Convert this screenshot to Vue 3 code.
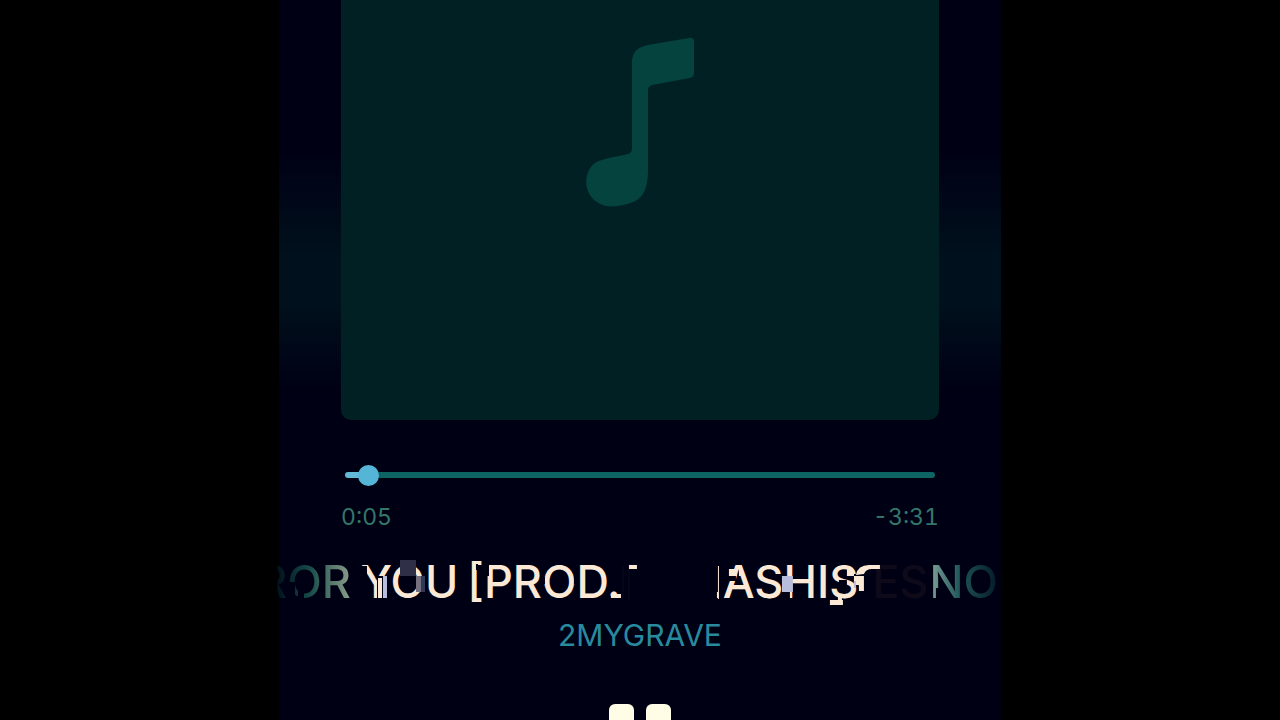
<script setup>
import { ref } from 'vue'

const duration = 216
const elapsed = ref(5)
const fmt = (s) => `${Math.floor(s / 60)}:${String(s % 60).padStart(2, '0')}`
</script>

<template>
  <div class="screen">
    <main class="player">
      <div class="artwork">
        <svg class="note" viewBox="0 0 110 172" aria-hidden="true">
          <path d="M47 25C47 15 53 10 63 8L104 1Q109 0 109 5V36Q109 40 105 41L67 48Q63 49 63 54V133C63 155 56 164 42 167C31 170 20 171 12 165C-2 156-2 135 10 126C18 121 32 120 43 117Q47 116 47 111Z" />
        </svg>
      </div>

      <section class="progress">
        <input id="seek" v-model.number="elapsed" class="seek" type="range" min="0" :max="duration" aria-label="Seek" :style="{ '--fill': (elapsed / duration) * 100 + '%' }" />
        <div class="times">
          <span>{{ fmt(elapsed) }}</span>
          <span>-{{ fmt(duration - elapsed) }}</span>
        </div>
      </section>

      <h1 class="title">
        <span class="lead">ROR</span>
        <span class="you">YOU</span>
        <span class="prod">[PROD.</span>
        <span class="hash">ASHIS</span>
        <span class="es">ES</span>
        <span class="no">NO</span>
        <svg class="glitch" viewBox="0 -2 722 56" preserveAspectRatio="none" aria-hidden="true">
          <g fill="#000014">
            <path d="M10 26H16V46H10ZM19 22H25V46H19ZM83 10H88V21H83ZM84 30H88V42H84ZM98 20H105V42H98ZM103 36H110V46H103ZM197 8H199V14H197ZM204 6H210V20H204ZM261 21H266V28H261ZM281 21H284V27H281ZM295 21H299V28H295ZM450 20H457V25H450ZM504 36H511V46H504ZM560 24H568V34H560ZM657 32H664V46H657Z" />
          </g>
          <g fill="#fbe9d6">
            <path d="M99 22H103V42H99ZM350 9H358V13H350ZM332 38H342V42H332ZM439 10H440V43H439ZM438 36H440V42H438ZM450 13H458V20H450ZM460 11H462V20H460ZM551 44H564V49H551ZM559 41H563V45H559ZM568 14H575V20H568ZM575 20H585V35H580V29H575ZM577 19Q579 9 590 9H601V13H593Q587 13 585 18Z" />
          </g>
          <path fill="#302f48" d="M121 4H137V20H121Z" />
          <path fill="#756f80" d="M137 20H142V36H137Z" />
          <path fill="#303857" d="M142 20H146V36H142Z" />
          <path fill="#b9bddc" d="M104 20H108V42H104ZM503 20H514V36H503ZM575 25H577V32H575Z" />
          <path stroke="#0b0b20" d="M344 10V42M350 13V44" />
        </svg>
      </h1>
      <p class="artist">2MYGRAVE</p>

      <button class="pause" type="button" aria-label="Pause"><i></i><i></i></button>
    </main>
  </div>
</template>

<style>
body {
  background: #000;
}
</style>

<style scoped>
.screen {
  height: 100vh;
  overflow: hidden;
  background: #000;
  font-family: Inter, "Liberation Sans", sans-serif;
}

.player {
  box-sizing: border-box;
  display: flex;
  flex-direction: column;
  width: 56.4%;
  min-height: 100%;
  margin: 0 auto;
  padding: 0 62px;
  background: linear-gradient(#000014 150px, #00111d 260px, #00111d 300px, #000014 390px);
}

.artwork {
  display: grid;
  place-items: center;
  aspect-ratio: 1;
  margin-top: -178px;
  border-radius: 10px;
  background: #002024;
}

.note {
  width: 110px;
  height: 172px;
  margin-top: 4px;
  fill: #05433e;
}

.progress {
  margin-top: 44px;
}

.seek {
  display: block;
  appearance: none;
  width: calc(100% - 8px);
  height: 22px;
  margin: 0 4px;
  background: none;
  cursor: pointer;
}

.seek::-webkit-slider-runnable-track {
  height: 6px;
  border-radius: 3px;
  background: linear-gradient(to right, #63b9d5 var(--fill), #0e6462 var(--fill));
}

.seek::-webkit-slider-thumb {
  appearance: none;
  width: 21px;
  height: 21px;
  margin-top: -7px;
  border-radius: 50%;
  background: #55b5d6;
}

.times {
  display: flex;
  justify-content: space-between;
  margin-top: 16px;
  color: #347769;
  font-size: 23px;
  line-height: 30px;
  font-variant-numeric: tabular-nums;
}

.title {
  position: relative;
  display: flex;
  margin: 22px -62px 0;
  color: #fbe9d6;
  font-size: 45px;
  font-weight: 500;
  line-height: 56px;
  white-space: nowrap;
}

.lead {
  margin-left: -21px;
  color: transparent;
  background: linear-gradient(to right, #0000 20%, #03141f 22%, #164a48 55%, #8c9e8b);
  background-clip: text;
}

.you {
  margin-left: 10px;
}

.prod {
  margin-left: 9px;
}

.hash {
  margin-left: 102px;
}

.es {
  margin-left: 14px;
  color: #0e0a1a;
}

.no {
  margin-left: 1px;
  color: transparent;
  background: linear-gradient(to right, #83a59a, #1f5558 45%, #041b27);
  background-clip: text;
}

.glitch {
  position: absolute;
  inset: 0;
  width: 100%;
  height: 100%;
}

.artist {
  margin: 7px 0 0;
  color: #298a9e;
  font-size: 30px;
  line-height: 36px;
  text-align: center;
}

.pause {
  display: flex;
  align-self: center;
  gap: 12px;
  margin-top: 51px;
  padding: 0;
  border: 0;
  background: none;
  cursor: pointer;
}

.pause i {
  width: 25px;
  height: 72px;
  border-radius: 6px;
  background: #fffde6;
}
</style>
